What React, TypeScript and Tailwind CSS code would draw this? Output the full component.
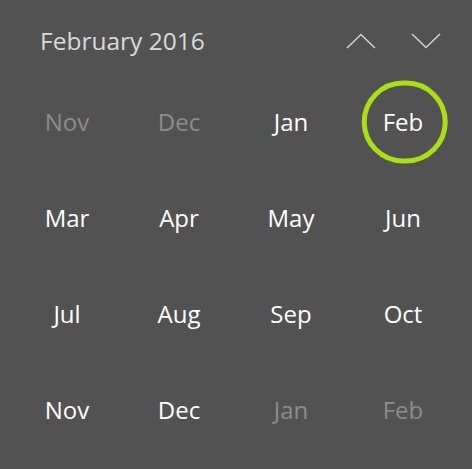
import React from "react";

const rows = [
  [
    { label: "Nov", dim: true },
    { label: "Dec", dim: true },
    { label: "Jan" },
    { label: "Feb", selected: true },
  ],
  [{ label: "Mar" }, { label: "Apr" }, { label: "May" }, { label: "Jun" }],
  [{ label: "Jul" }, { label: "Aug" }, { label: "Sep" }, { label: "Oct" }],
  [
    { label: "Nov" },
    { label: "Dec" },
    { label: "Jan", dim: true },
    { label: "Feb", dim: true },
  ],
];

type Month = { label: string; dim?: boolean; selected?: boolean };

const Chevron = ({ up }: { up?: boolean }) => (
  <svg width="30" height="16" viewBox="0 0 30 16" fill="none">
    <path
      d={up ? "M1 15 L15 1.5 L29 15" : "M1 1 L15 14.5 L29 1"}
      stroke="#cfcfcf"
      strokeWidth="1.6"
    />
  </svg>
);

const MonthCell = ({ month }: { month: Month }) => (
  <div className="relative flex h-[96px] items-center justify-center">
    {month.selected && (
      <div className="absolute left-1/2 top-1/2 h-[83px] w-[86px] -translate-x-[48%] -translate-y-1/2 rounded-full border-[5px] border-[#acde14]" />
    )}
    <span
      className={
        month.dim ? "relative text-[#8c8c8c]" : "relative text-white"
      }
    >
      {month.label}
    </span>
  </div>
);

const App = () => {
  return (
    <div
      className="h-[469px] w-[472px] overflow-hidden bg-[#525252]"
      style={{ fontFamily: '"Open Sans", "Noto Sans", sans-serif' }}
    >
      <div className="flex h-[74px] items-center justify-between pl-[40px] pr-[31px] pt-[8px]">
        <span className="text-[24.5px] text-[#dadada]">February 2016</span>
        <div className="flex items-center gap-[35px]">
          <Chevron up />
          <Chevron />
        </div>
      </div>
      <div className="pl-[11px] pr-[13px] text-[24px]">
        {rows.map((row, i) => (
          <div key={i} className="grid grid-cols-4">
            {row.map((m, j) => (
              <MonthCell key={j} month={m} />
            ))}
          </div>
        ))}
      </div>
    </div>
  );
};

export default App;
